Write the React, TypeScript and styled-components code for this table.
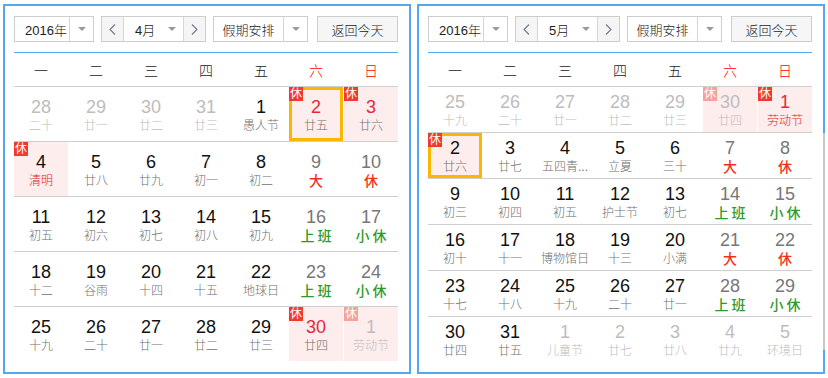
import React from "react";
import styled, { createGlobalStyle, css } from "styled-components";

const Global = createGlobalStyle`
  html, body { margin: 0; padding: 0; background: #fff; }
  body { font-family: "Liberation Sans", Arial, "Noto Sans CJK SC", sans-serif; }
`;

const Page = styled.div`
  display: flex;
  gap: 6px;
  padding: 4px 0 0 3px;
`;

const Panel = styled.div<{ $edge?: boolean }>`
  position: relative;
  box-sizing: border-box;
  width: 408px;
  height: 370px;
  border: 2px solid #55a7f2;
  padding: 10px 11px 0 9px;
  ${(p) =>
    p.$edge &&
    css`
      &::after {
        content: "";
        position: absolute;
        right: -2px;
        top: 127px;
        width: 2px;
        height: 217px;
        background: #c6c6c6;
      }
    `}
`;

const Toolbar = styled.div`
  display: flex;
  height: 26px;
  font-size: 13px;
  font-weight: 300;
  color: #222;
`;

const Box = styled.div<{ $w: number; $ml?: number; $bg?: string }>`
  box-sizing: border-box;
  display: flex;
  width: ${(p) => p.$w}px;
  height: 26px;
  margin-left: ${(p) => p.$ml ?? 0}px;
  border: 1px solid #cdcdcd;
  background: ${(p) => p.$bg ?? "#fff"};
`;

const Label = styled.div<{ $center?: boolean; $pl?: number }>`
  flex: 1;
  display: flex;
  align-items: center;
  justify-content: ${(p) => (p.$center ? "center" : "flex-start")};
  padding-left: ${(p) => p.$pl ?? 0}px;
  white-space: nowrap;
`;

const ArrowBox = styled.div`
  width: 23px;
  border-left: 1px solid #d6d6d6;
  display: flex;
  align-items: center;
  justify-content: center;
`;

const Caret = styled.span`
  width: 0;
  height: 0;
  border-left: 4px solid transparent;
  border-right: 4px solid transparent;
  border-top: 4px solid #9a9a9a;
`;

const NavBtn = styled.div`
  width: 21px;
  display: flex;
  align-items: center;
  justify-content: center;
  background: #f5f5f5;
`;

const MonthPart = styled.div`
  flex: 1;
  display: flex;
  align-items: center;
  justify-content: space-between;
  padding: 0 7px 0 11px;
  border-left: 1px solid #d6d6d6;
  border-right: 1px solid #d6d6d6;
  background: #fff;
`;

const BlueLine = styled.div`
  margin-top: 10px;
  height: 1px;
  background: #55a7f2;
`;

const Grid7 = styled.div`
  display: grid;
  grid-template-columns: repeat(7, 54px);
  column-gap: 1px;
`;

const Header = styled(Grid7)`
  height: 33px;
  align-items: center;
`;

const WeekDay = styled.div<{ $red?: boolean }>`
  text-align: center;
  font-size: 14px;
  font-weight: 300;
  color: ${(p) => (p.$red ? "#f00" : "#222")};
`;

const Row = styled(Grid7)<{ $h: number }>`
  border-top: 1px solid #cfcfcf;
  height: ${(p) => p.$h}px;
`;

const CellBox = styled.div<{ $pink?: boolean; $sel?: boolean; $pt: number }>`
  position: relative;
  box-sizing: border-box;
  display: flex;
  flex-direction: column;
  align-items: center;
  padding-top: ${(p) => p.$pt}px;
  background: ${(p) => (p.$pink ? "#fdeded" : "transparent")};
  ${(p) =>
    p.$sel &&
    css`
      box-shadow: inset 0 0 0 3px #fbb700;
    `}
`;

const Num = styled.div<{ $c: string }>`
  font-size: 18px;
  line-height: 20px;
  color: ${(p) => p.$c};
`;

const Lunar = styled.div<{ $c: string; $bold?: boolean }>`
  font-size: ${(p) => (p.$bold ? "14px" : "12px")};
  line-height: 18px;
  color: ${(p) => p.$c};
  font-weight: ${(p) => (p.$bold ? 500 : 300)};
  letter-spacing: ${(p) => (p.$bold ? "3px" : "0")};
  margin-right: ${(p) => (p.$bold ? "-3px" : "0")};
  white-space: nowrap;
`;

const Badge = styled.span<{ $faded?: boolean }>`
  position: absolute;
  top: 0;
  left: 0;
  width: 14px;
  height: 14px;
  line-height: 14px;
  font-size: 12px;
  text-align: center;
  color: #fff;
  background: ${(p) => (p.$faded ? "#f7a19b" : "#f4382c")};
  z-index: 1;
`;

type CellData = { d: number; t: string; f: string };
const c = (d: number, t: string, f = ""): CellData => ({ d, t, f });

const april: CellData[][] = [
  [c(28, "二十", "o"), c(29, "廿一", "o"), c(30, "廿二", "o"), c(31, "廿三", "o"), c(1, "愚人节"), c(2, "廿五", "bprs"), c(3, "廿六", "bpr")],
  [c(4, "清明", "bpL"), c(5, "廿八"), c(6, "廿九"), c(7, "初一"), c(8, "初二"), c(9, "大", "wR"), c(10, "休", "wR")],
  [c(11, "初五"), c(12, "初六"), c(13, "初七"), c(14, "初八"), c(15, "初九"), c(16, "上班", "wG"), c(17, "小休", "wG")],
  [c(18, "十二"), c(19, "谷雨"), c(20, "十四"), c(21, "十五"), c(22, "地球日"), c(23, "上班", "wG"), c(24, "小休", "wG")],
  [c(25, "十九"), c(26, "二十"), c(27, "廿一"), c(28, "廿二"), c(29, "廿三"), c(30, "廿四", "bpr"), c(1, "劳动节", "ofp")],
];

const may: CellData[][] = [
  [c(25, "十九", "o"), c(26, "二十", "o"), c(27, "廿一", "o"), c(28, "廿二", "o"), c(29, "廿三", "o"), c(30, "廿四", "ofp"), c(1, "劳动节", "bprL")],
  [c(2, "廿六", "bps"), c(3, "廿七"), c(4, "五四青..."), c(5, "立夏"), c(6, "三十"), c(7, "大", "wR"), c(8, "休", "wR")],
  [c(9, "初三"), c(10, "初四"), c(11, "初五"), c(12, "护士节"), c(13, "初七"), c(14, "上班", "wG"), c(15, "小休", "wG")],
  [c(16, "初十"), c(17, "十一"), c(18, "博物馆日"), c(19, "十三"), c(20, "小满"), c(21, "大", "wR"), c(22, "休", "wR")],
  [c(23, "十七"), c(24, "十八"), c(25, "十九"), c(26, "二十"), c(27, "廿一"), c(28, "上班", "wG"), c(29, "小休", "wG")],
  [c(30, "廿四"), c(31, "廿五"), c(1, "儿童节", "o"), c(2, "廿七", "o"), c(3, "廿八", "o"), c(4, "廿九", "o"), c(5, "环境日", "o")],
];

const weekDays = ["一", "二", "三", "四", "五", "六", "日"];

function Cell({ data, pt }: { data: CellData; pt: number }) {
  const f = data.f;
  const has = (k: string) => f.includes(k);
  const numColor = has("o") ? "#bdbdbd" : has("r") ? "#e8273a" : has("w") ? "#777" : "#111";
  const lunarColor = has("o")
    ? "#bdbdbd"
    : has("L")
    ? "#e3161c"
    : has("G")
    ? "#2d9a2d"
    : has("R")
    ? "#f0301c"
    : "#6f6f6f";
  return (
    <CellBox $pink={has("p")} $sel={has("s")} $pt={pt}>
      {(has("b") || has("f")) && <Badge $faded={has("f")}>休</Badge>}
      <Num $c={numColor}>{data.d}</Num>
      <Lunar $c={lunarColor} $bold={has("G") || has("R")}>
        {data.t}
      </Lunar>
    </CellBox>
  );
}

const Chevron = ({ dir }: { dir: "l" | "r" }) => (
  <svg width="7" height="11" viewBox="0 0 7 11">
    <polyline
      points={dir === "l" ? "6,0.5 1,5.5 6,10.5" : "1,0.5 6,5.5 1,10.5"}
      fill="none"
      stroke="#6a7a8c"
      strokeWidth="1.1"
    />
  </svg>
);

function Calendar({ month, rows, rowH, pt, edge }: { month: string; rows: CellData[][]; rowH: number; pt: number; edge?: boolean }) {
  return (
    <Panel $edge={edge}>
      <Toolbar>
        <Box $w={80}>
          <Label $pl={10}>2016年</Label>
          <ArrowBox>
            <Caret />
          </ArrowBox>
        </Box>
        <Box $w={105} $ml={7} $bg="#f5f5f5">
          <NavBtn>
            <Chevron dir="l" />
          </NavBtn>
          <MonthPart>
            <span>{month}</span>
            <Caret />
          </MonthPart>
          <NavBtn>
            <Chevron dir="r" />
          </NavBtn>
        </Box>
        <Box $w={95} $ml={7}>
          <Label $center>假期安排</Label>
          <ArrowBox>
            <Caret />
          </ArrowBox>
        </Box>
        <Box $w={81} $ml={9} $bg="#f6f6f6">
          <Label $center>返回今天</Label>
        </Box>
      </Toolbar>
      <BlueLine />
      <Header>
        {weekDays.map((w, i) => (
          <WeekDay key={w} $red={i >= 5}>
            {w}
          </WeekDay>
        ))}
      </Header>
      {rows.map((r, i) => (
        <Row key={i} $h={rowH}>
          {r.map((d, j) => (
            <Cell key={j} data={d} pt={pt} />
          ))}
        </Row>
      ))}
    </Panel>
  );
}

export default function App() {
  return (
    <>
      <Global />
      <Page>
        <Calendar month="4月" rows={april} rowH={54} pt={10} />
        <Calendar month="5月" rows={may} rowH={45} pt={5} edge />
      </Page>
    </>
  );
}
